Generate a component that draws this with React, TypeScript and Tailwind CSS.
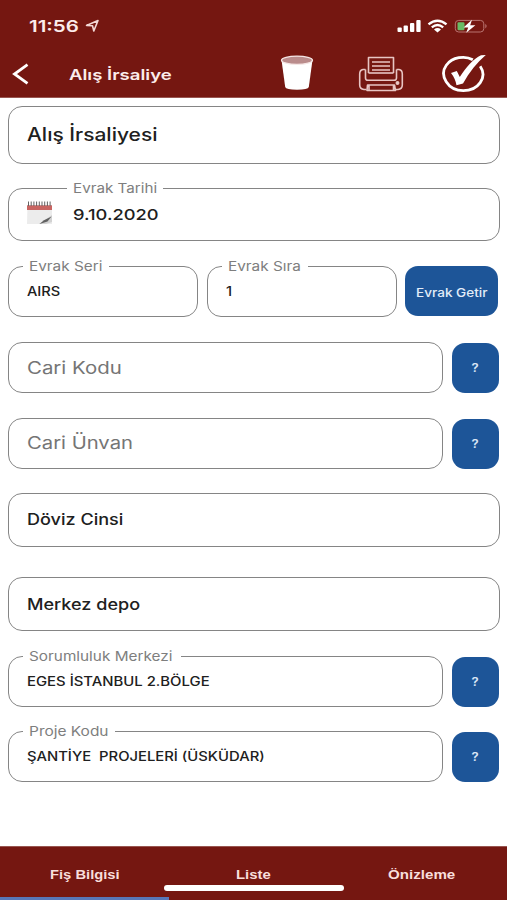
import type { ReactNode } from "react";

type TextProps = { children: ReactNode; className?: string; width: number };

// Text whose box has a fixed width; the glyphs are widened by the class given.
function Wide({ children, className = "", width }: TextProps) {
  return (
    <span className="block shrink-0" style={{ width }}>
      <span className={`inline-block origin-left whitespace-pre ${className}`}>{children}</span>
    </span>
  );
}

function Field({ label, children, className = "" }: { label?: ReactNode; children: ReactNode; className?: string }) {
  return (
    <div className={`relative flex items-center rounded-[14px] border-[1.5px] border-[#858585] bg-white pl-[17.5px] ${className}`}>
      {label}
      {children}
    </div>
  );
}

function Label({ children, className = "", width }: TextProps) {
  return (
    <div className={`absolute bg-white pl-[6px] leading-[20px] ${className}`} style={{ width }}>
      {children}
    </div>
  );
}

const LABEL = "text-[13px] leading-[20px] text-[#7e7e7e]";

function Help() {
  return (
    <button className="ml-[9px] flex h-[50px] w-[47px] shrink-0 items-center justify-center rounded-[13px] bg-[#1d5598] pt-[2px] text-[11.5px] font-semibold text-[#d9e6f5]">
      <span className="inline-block scale-x-[1.15]">?</span>
    </button>
  );
}

function StatusIcons() {
  return (
    <svg width="92" height="16" viewBox="0 0 92 16" className="mt-[19px]" fill="none">
      <g fill="#fff">
        <rect x="0.5" y="8.5" width="4.3" height="4.5" rx="1" />
        <rect x="6.6" y="6.5" width="4.3" height="6.5" rx="1" />
        <rect x="13" y="4" width="4.3" height="9" rx="1" />
        <rect x="19.3" y="1" width="4.3" height="12" rx="1" />
      </g>
      <g stroke="#fff" strokeWidth="2.4">
        <path d="M31.5 5.4Q40.5 -2 49.5 5.4" />
        <path d="M34.8 8.4Q40.5 3.8 46.2 8.4" />
      </g>
      <path d="M37 10.4Q40.5 7.8 44 10.4L40.5 13.4Z" fill="#fff" />
      <rect x="58.3" y="1.4" width="28.5" height="11.6" rx="3.4" stroke="#b97571" />
      <path d="M88.3 4.8Q91 7.1 88.3 9.4Z" fill="#b97571" />
      <rect x="60.5" y="3.2" width="7" height="8" rx="1.2" fill="#68bd65" />
      <path d="M75 0.8L66.5 8.4H71.2L69.2 13.8L78.4 6.2H73.2Z" fill="#fff" />
    </svg>
  );
}

function Bucket() {
  return (
    <svg width="34" height="36" viewBox="0 0 34 36">
      <path d="M1.5 5L5.2 32Q6 34.7 17 34.7Q28 34.7 28.8 32L32.5 5Z" fill="#fff" />
      <ellipse cx="17" cy="5.2" rx="15.5" ry="4.1" fill="#ba8c8c" stroke="#f5e6e5" strokeWidth="1.3" />
    </svg>
  );
}

function Printer() {
  return (
    <svg width="46" height="36" viewBox="0 0 46 36" fill="none" stroke="#e8c5c3" strokeWidth="1.6" strokeLinejoin="round">
      <path d="M10.5 17V1.5H35.5V17M14 6H32M14 10H32M14 14H32" />
      <path d="M7.5 13.5V22Q7.5 24.3 10 24.3H36Q38.5 24.3 38.5 22V13.5" />
      <path d="M10.5 17H35.5" />
      <path d="M7.5 13.5H5Q1.7 14 1.7 18V29Q1.7 33 6 33.5H8.5M38.5 13.5H41Q44.3 14 44.3 18V29Q44.3 33 40 33.5H37.5" />
      <path d="M9 34.5L9.5 29H36.5L37.5 34.5ZM11 29.5V34M35.5 29.5V34" />
      <circle cx="39.5" cy="27" r="1.2" fill="#f4dedc" />
    </svg>
  );
}

function CheckCircle() {
  return (
    <svg width="46" height="40" viewBox="0 0 46 40" fill="none">
      <path d="M31.8 5.8C24 1.2 11.2 3.1 5.3 11.2C-2 21.4 6.7 36.7 22.3 36.7C37.3 36.7 46.8 23.4 39.2 12.2" stroke="#fff" strokeWidth="2.8" />
      <path d="M10 19L15.8 17L18.8 23C25 13.3 32.6 4.5 40 1.2L44.8 1C36 8.5 28.3 18 22 29.4L15.5 31.3Q14.3 24.4 10 19Z" fill="#fff" />
    </svg>
  );
}

function Calendar() {
  return (
    <svg width="27" height="26" viewBox="0 0 27 26" className="ml-[-1px] mt-[-3px] shrink-0">
      <path d="M1.5 5H26V24H1Z" fill="#ececec" />
      <path d="M1 5.3H26V10H1Z" fill="#c86562" />
      <path d="M2.5 1.5V6M5.2 1.5V6M7.9 1.5V6M10.6 1.5V6M13.3 1.5V6M16 1.5V6M18.7 1.5V6M21.4 1.5V6M24.1 1.5V6" stroke="#636363" strokeWidth="1" />
      <path d="M13 24L26 15V22L20 24Z" fill="#d2d2d2" />
      <path d="M13.5 24L18 20.3L25.5 16.5L21.5 21.5Z" fill="#606060" />
    </svg>
  );
}

export default function App() {
  return (
    <div className="flex h-[900px] w-[507px] flex-col overflow-hidden bg-white font-['Inter','Liberation_Sans',sans-serif] text-[#202020]">
      <header className="h-[98px] shrink-0 border-b border-[#985651] bg-[#751711] text-[#fceceb]">
        <div className="flex h-[51px] items-start">
          <div className="flex pl-[29px] pt-[14px]">
            <Wide width={56} className="scale-x-[1.28] text-[16px] font-semibold leading-[24px]">11:56</Wide>
            <svg width="15" height="14" viewBox="0 0 15 14" className="mt-[5px]" fill="none">
              <path d="M1.5 6.4L13 1.5L8.8 12L7.5 6.7Z" stroke="#f3d8d6" strokeWidth="1.6" strokeLinejoin="round" />
            </svg>
          </div>
          <div className="ml-auto mr-[18px]"><StatusIcons /></div>
        </div>
        <div className="flex h-[45px] items-center">
          <svg width="18" height="24" viewBox="0 0 18 24" className="ml-[12px]" fill="none">
            <path d="M15.5 2.7L2.5 12L15.5 21.3" stroke="#fff" strokeWidth="2.8" />
          </svg>
          <div className="ml-[39px]">
            <Wide width={112} className="scale-x-[1.28] text-[14.5px] font-semibold leading-[20px]">Alış İrsaliye</Wide>
          </div>
          <div className="ml-auto mr-[20px] flex items-center">
            <span className="-mt-px"><Bucket /></span>
            <span className="ml-[44px]"><Printer /></span>
            <span className="ml-[37px]"><CheckCircle /></span>
          </div>
        </div>
      </header>

      <main className="flex flex-col pl-[8px] pr-[7px] pt-[8px]">
        <Field className="h-[58px]">
          <Wide width={140} className="scale-x-[1.165] text-[18px] font-medium leading-[24px]">Alış İrsaliyesi</Wide>
        </Field>
        <Field
          className="mt-[24px] h-[53px]"
          label={<Label width={96} className="-top-[12px] left-[58px]"><Wide width={84} className={`scale-x-[1.17] ${LABEL}`}>Evrak Tarihi</Wide></Label>}
        >
          <Calendar />
          <div className="ml-[20px]">
            <Wide width={90} className="scale-x-[1.22] text-[15px] font-medium leading-[24px]">9.10.2020</Wide>
          </div>
        </Field>
        <div className="mt-[25px] flex">
          <Field
            className="h-[51px] w-[190px]"
            label={<Label width={86} className="-top-[12px] left-[14px]"><Wide width={74} className={`scale-x-[1.18] ${LABEL}`}>Evrak Seri</Wide></Label>}
          >
            <div className="-mt-[3px]"><Wide width={40} className="scale-x-[1.17] text-[12.5px] font-medium leading-[20px]">AIRS</Wide></div>
          </Field>
          <Field
            className="ml-[9px] h-[51px] w-[190px]"
            label={<Label width={86} className="-top-[12px] left-[14px]"><Wide width={76} className={`scale-x-[1.18] ${LABEL}`}>Evrak Sıra</Wide></Label>}
          >
            <div className="-mt-[3px]"><Wide width={40} className="scale-x-[1.17] text-[12.5px] font-medium leading-[20px]">1</Wide></div>
          </Field>
          <button className="ml-[8px] flex h-[50px] w-[93px] items-center rounded-[13px] bg-[#1d5598] pb-[1px] pl-[11px] text-left text-[#e2edf9]">
            <Wide width={72} className="scale-x-[1.18] text-[11.5px] font-medium leading-[20px]">Evrak Getir</Wide>
          </button>
        </div>
        <div className="mt-[25px] flex items-center">
          <Field className="h-[51px] w-[435px]">
            <Wide width={100} className="scale-x-[1.2] text-[17px] leading-[24px] text-[#757575]">Cari Kodu</Wide>
          </Field>
          <Help />
        </div>
        <div className="mt-[25px] flex items-center">
          <Field className="h-[51px] w-[435px] pb-[1px]">
            <Wide width={110} className="scale-x-[1.19] text-[17px] leading-[24px] text-[#757575]">Cari Ünvan</Wide>
          </Field>
          <Help />
        </div>
        <Field className="mt-[24px] h-[54px] pb-[1px]">
          <Wide width={100} className="scale-x-[1.165] text-[15.5px] font-medium leading-[24px]">Döviz Cinsi</Wide>
        </Field>
        <Field className="mt-[30px] h-[54px]">
          <Wide width={120} className="scale-x-[1.165] text-[15.5px] font-medium leading-[24px]">Merkez depo</Wide>
        </Field>
        <div className="mt-[25px] flex items-center">
          <Field
            className="h-[51px] w-[435px]"
            label={<Label width={158} className="-top-[12px] left-[14px]"><Wide width={146} className={`scale-x-[1.18] ${LABEL}`}>Sorumluluk Merkezi</Wide></Label>}
          >
            <div className="-mt-[4px]"><Wide width={190} className="scale-x-[1.19] text-[12.5px] font-medium leading-[20px]">EGES İSTANBUL 2.BÖLGE</Wide></div>
          </Field>
          <Help />
        </div>
        <div className="mt-[24px] flex items-center">
          <Field
            className="h-[51px] w-[435px]"
            label={<Label width={92} className="-top-[12px] left-[14px]"><Wide width={80} className={`scale-x-[1.19] ${LABEL}`}>Proje Kodu</Wide></Label>}
          >
            <div className="-mt-[3px]"><Wide width={240} className="scale-x-[1.185] text-[12.5px] font-medium leading-[20px]">ŞANTİYE  PROJELERİ (ÜSKÜDAR)</Wide></div>
          </Field>
          <Help />
        </div>
      </main>

      <footer className="mt-auto flex h-[54px] shrink-0 flex-col border-t border-[#985651] bg-[#751711] text-[#f8dedc]">
        <nav className="grid h-[38px] grid-cols-3 items-end font-['Liberation_Sans',sans-serif] text-[12.5px] font-bold leading-[20px]">
          <div className="pl-[50px]"><Wide width={80} className="scale-x-[1.18]">Fiş Bilgisi</Wide></div>
          <div className="pl-[67px]"><Wide width={50} className="scale-x-[1.19]">Liste</Wide></div>
          <div className="pl-[50px]"><Wide width={80} className="scale-x-[1.21]">Önizleme</Wide></div>
        </nav>
        <div className="ml-[164px] h-[6px] w-[180px] rounded-full bg-white" />
        <div className="mt-auto h-[3px] w-[169px] bg-[#5877b8]" />
      </footer>
    </div>
  );
}
